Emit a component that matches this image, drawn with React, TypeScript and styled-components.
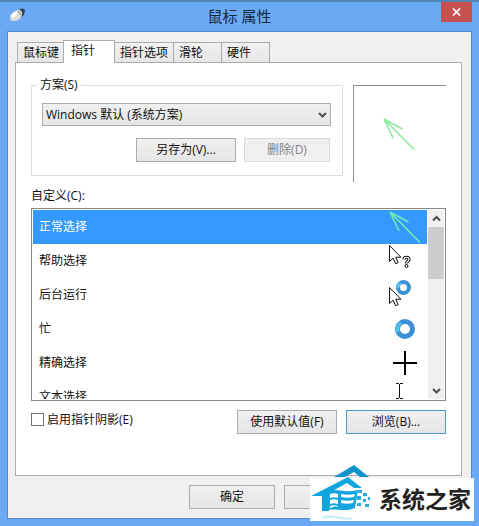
import React, { useState } from "react";
import styled, { createGlobalStyle, css } from "styled-components";

const GlobalStyle = createGlobalStyle`
  * { box-sizing: border-box; }
  body { margin: 0; background: #6aaaf5; }
  body, button, select, input {
    font-family: "Open Sans", "Noto Sans CJK SC", sans-serif;
    font-size: 12px;
    line-height: 16px;
    color: #111;
  }
`;

const Window = styled.div`
  position: relative;
  background: #6aaaf5;
  border-top: 2px solid #5384b3;
  padding: 0 7px 7px;
`;

const TitleBar = styled.header`
  display: grid;
  grid-template-columns: 32px 1fr 32px;
  align-items: start;
  height: 29px;
`;

const TitleIcon = styled.svg`
  margin: 5px 0 0 2px;
`;

const Title = styled.h1`
  margin: 4px 0 0;
  font-size: 15px;
  font-weight: 400;
  line-height: 20px;
  text-align: center;
  color: #16283c;
`;

const CloseButton = styled.button`
  display: flex;
  align-items: center;
  justify-content: center;
  justify-self: end;
  width: 31px;
  height: 20px;
  padding: 0;
  border: 0;
  background: #c75050;
`;

const Client = styled.main`
  padding: 8px 9px 9px 7px;
  border: 1px solid #5088cc;
  background: #f0f0f0;
`;

const TabStrip = styled.div`
  display: flex;
  align-items: flex-end;
  height: 23px;
  padding-left: 2px;
`;

const Tab = styled.button<{ $active: boolean }>`
  position: relative;
  height: 21px;
  margin-right: -1px;
  padding: 0 5px;
  border: 1px solid #acacac;
  background: linear-gradient(#f1f1f1, #e6e6e6);
  white-space: nowrap;
  ${(p) =>
    p.$active &&
    css`
      z-index: 1;
      height: 23px;
      margin-left: -1px;
      padding-bottom: 3px;
      border-bottom: 0;
      background: #fff;
    `}
`;

const RoomyTab = styled(Tab)`
  padding: 0 18px 0 5px;
  ${(p) => p.$active && css`padding: 0 19px 3px 7px;`}
`;

const Panel = styled.section`
  margin-top: -1px;
  padding: 14px 15px 41px;
  border: 1px solid #acacac;
  background: #fff;
`;

const SchemeRow = styled.div`
  display: grid;
  grid-template-columns: 312fr 93fr;
  gap: 10px;
  align-items: start;
`;

const SchemeGroup = styled.fieldset`
  min-width: 0;
  margin: 0;
  padding: 10px 11px 13px 10px;
  border: 1px solid #dcdcdc;
`;

const Legend = styled.legend`
  margin-left: -5px;
  padding: 0 3px;
`;

const SelectWrap = styled.div`
  display: grid;
  align-items: center;
  & > * { grid-area: 1 / 1; }
  & > svg { justify-self: end; margin-right: 4px; pointer-events: none; }
`;

const Select = styled.select`
  appearance: none;
  width: 100%;
  height: 23px;
  padding: 0 20px 0 3px;
  border: 1px solid #acacac;
  border-radius: 0;
  background: linear-gradient(#f0f0f0, #e5e5e5);
`;

const ButtonRow = styled.div`
  display: flex;
  justify-content: flex-end;
  gap: 8px;
  margin-top: 12px;
  padding-right: 1px;
`;

const PushButton = styled.button<{ $wide?: boolean; $primary?: boolean }>`
  width: ${(p) => (p.$wide ? 100 : 86)}px;
  height: 24px;
  padding: 0;
  border: 1px solid ${(p) => (p.$primary ? "#4a9bc9" : "#acacac")};
  background: linear-gradient(#f0f0f0, #e5e5e5);
  white-space: nowrap;
  &:disabled {
    border-color: #d9d9d9;
    background: #efefef;
    color: #838383;
  }
`;

const Preview = styled.div`
  height: 97px;
  margin-top: 8px;
  padding: 32px 0 0 29px;
  border-top: 1px solid #8c8c8c;
  border-left: 1px solid #8c8c8c;
`;

const ListLabel = styled.div`
  margin: 6px 0 4px;
`;

const ListFrame = styled.div`
  display: grid;
  grid-template-columns: 1fr 16px;
  column-gap: 1px;
  height: 193px;
  padding: 1px;
  border: 1px solid #828790;
`;

const CursorList = styled.ul`
  margin: 0;
  padding: 0;
  overflow: hidden;
  list-style: none;
`;

const CursorRow = styled.li<{ $selected: boolean }>`
  display: flex;
  align-items: center;
  justify-content: space-between;
  height: 34px;
  padding: 0 6px;
  background: ${(p) => (p.$selected ? "#3399ff" : "#fff")};
  color: ${(p) => (p.$selected ? "#fff" : "#111")};
`;

const ScrollBar = styled.div`
  display: flex;
  flex-direction: column;
  height: 189px;
  background: #f0f0f0;
`;

const ScrollButton = styled.button`
  display: flex;
  align-items: center;
  justify-content: center;
  height: 17px;
  padding: 0;
  border: 0;
  background: #f0f0f0;
`;

const ScrollTrack = styled.div`
  flex: 1;
`;

const ScrollThumb = styled.div`
  height: 52px;
  background: #cdcdcd;
`;

const OptionsRow = styled.div`
  display: flex;
  gap: 9px;
  margin-top: 9px;
`;

const CheckLabel = styled.label`
  display: flex;
  gap: 3px;
  margin-right: auto;
  padding-top: 2px;
`;

const CheckBox = styled.input`
  appearance: none;
  width: 13px;
  height: 13px;
  margin: 1px 0 0;
  border: 1px solid #707070;
  background: #fff;
  &:checked { background: #3399ff; }
`;

const Footer = styled.footer`
  display: flex;
  justify-content: flex-end;
  gap: 9px;
  margin-top: 9px;
  padding-right: 92px;
`;

const SiteBadge = styled.aside`
  position: absolute;
  z-index: 2;
  right: 5px;
  bottom: 5px;
  display: flex;
  align-items: flex-end;
  width: 164px;
  height: 43px;
  background: #fff;
`;

const BadgeLogo = styled.svg`
  flex: none;
`;

const BadgeName = styled.strong`
  margin: 0 0 8px 7px;
  font-family: "Noto Sans CJK SC", sans-serif;
  font-size: 23px;
  font-weight: 700;
  line-height: 30px;
  white-space: nowrap;
  color: #222;
`;

const Chevron = ({ up = false }: { up?: boolean }) => (
  <svg width="9" height="8" viewBox="0 0 9 8" aria-hidden="true">
    <path d={up ? "M1 5.5 4.5 2 8 5.5" : "M1 2 4.5 5.5 8 2"} fill="none" stroke="#505050" strokeWidth="2" />
  </svg>
);

const ArrowLines = ({ color }: { color: string }) => (
  <path d="M1 1 31 31.5M1 1 19.5 11M1 1 10 20" fill="none" stroke={color} strokeWidth="1.6" />
);

const PointerShape = ({ y = 0 }: { y?: number }) => (
  <path
    transform={`translate(0 ${y})`}
    d="M.5.5v16l3.6-3.4 2.5 5.6 2.6-1.1-2.4-5.4h5.1z"
    fill="#fff"
    stroke="#111"
  />
);

const cursors: { name: string; art: React.ReactNode }[] = [
  { name: "正常选择", art: <ArrowLines color="#6fe8b8" /> },
  {
    name: "帮助选择",
    art: (
      <>
        <PointerShape />
        <path d="M15 14.5c0-3 5-3 5 0 0 2-2.5 1.5-2.5 4" fill="none" stroke="#111" strokeWidth="3.2" />
        <path d="M15 14.5c0-3 5-3 5 0 0 2-2.5 1.5-2.5 4" fill="none" stroke="#fff" strokeWidth="1.2" />
        <circle cx="17.5" cy="21" r="1.5" fill="#fff" stroke="#111" />
      </>
    ),
  },
  {
    name: "后台运行",
    art: (
      <>
        <circle cx="14.5" cy="8.5" r="5.5" fill="#fff" stroke="#3a92d6" strokeWidth="4" />
        <path d="M9 9a5.5 5.5 0 0 1 3-5" fill="none" stroke="#56c0ec" strokeWidth="3" />
        <PointerShape y={8} />
      </>
    ),
  },
  {
    name: "忙",
    art: (
      <>
        <circle cx="16" cy="16" r="7.5" fill="#fff" stroke="#3a8fd6" strokeWidth="5" />
        <path d="M9 19a7.5 7.5 0 0 1 3-9" fill="none" stroke="#4fc0ee" strokeWidth="4" />
      </>
    ),
  },
  { name: "精确选择", art: <path d="M16 4v24M4 16h24" stroke="#000" strokeWidth="2" /> },
  { name: "文本选择", art: <path d="M7 2.5h3M11 2.5h3M10.5 3v14M7 17.5h3M11 17.5h3" stroke="#111" fill="none" /> },
];

const tabs = [
  { name: "鼠标键", roomy: false },
  { name: "指针", roomy: true },
  { name: "指针选项", roomy: false },
  { name: "滑轮", roomy: true },
  { name: "硬件", roomy: true },
];

export default function App() {
  const [tab, setTab] = useState("指针");
  const [selected, setSelected] = useState(0);

  return (
    <>
      <GlobalStyle />
      <Window>
        <TitleBar>
          <TitleIcon width="18" height="16" viewBox="0 0 18 16" aria-hidden="true">
            <path d="M10 4c1-3 4-3 6-1l-1 5-3 2z" fill="#36454f" />
            <path d="M1 10c0-3 5-7 9-7 3 0 4 4 2 7s-4 4-7 4-4-1-4-4z" fill="#dcdcd8" />
            <path d="M2 9c1-2 4-5 7-5l-2 5-3 2z" fill="#fff" />
            <path d="M9 4l3 4" stroke="#767d80" />
          </TitleIcon>
          <Title>鼠标 属性</Title>
          <CloseButton aria-label="关闭">
            <svg width="9" height="8" viewBox="0 0 9 8" aria-hidden="true">
              <path d="M1 .5 8 7.5M8 .5 1 7.5" stroke="#fff" strokeWidth="1.7" />
            </svg>
          </CloseButton>
        </TitleBar>
        <Client>
          <TabStrip role="tablist">
            {tabs.map(({ name, roomy }) => {
              const Part = roomy ? RoomyTab : Tab;
              return (
                <Part key={name} role="tab" aria-selected={tab === name} $active={tab === name} onClick={() => setTab(name)}>
                  {name}
                </Part>
              );
            })}
          </TabStrip>
          <Panel role="tabpanel">
            <SchemeRow>
              <SchemeGroup>
                <Legend>方案(S)</Legend>
                <SelectWrap>
                  <Select aria-label="方案">
                    <option>Windows 默认 (系统方案)</option>
                  </Select>
                  <Chevron />
                </SelectWrap>
                <ButtonRow>
                  <PushButton $wide>另存为(V)...</PushButton>
                  <PushButton disabled>删除(D)</PushButton>
                </ButtonRow>
              </SchemeGroup>
              <Preview>
                <svg width="33" height="33" viewBox="0 0 33 33" aria-hidden="true">
                  <ArrowLines color="#8de99a" />
                </svg>
              </Preview>
            </SchemeRow>
            <ListLabel id="cursor-list-label">自定义(C):</ListLabel>
            <ListFrame>
              <CursorList role="listbox" aria-labelledby="cursor-list-label">
                {cursors.map(({ name, art }, i) => (
                  <CursorRow key={name} role="option" aria-selected={i === selected} $selected={i === selected} onClick={() => setSelected(i)}>
                    {name}
                    <svg width="32" height="32" viewBox="0 0 32 32" aria-hidden="true">
                      {art}
                    </svg>
                  </CursorRow>
                ))}
              </CursorList>
              <ScrollBar>
                <ScrollButton aria-label="向上滚动">
                  <Chevron up />
                </ScrollButton>
                <ScrollTrack>
                  <ScrollThumb />
                </ScrollTrack>
                <ScrollButton aria-label="向下滚动">
                  <Chevron />
                </ScrollButton>
              </ScrollBar>
            </ListFrame>
            <OptionsRow>
              <CheckLabel>
                <CheckBox type="checkbox" />
                启用指针阴影(E)
              </CheckLabel>
              <PushButton $wide>使用默认值(F)</PushButton>
              <PushButton $wide $primary>浏览(B)...</PushButton>
            </OptionsRow>
          </Panel>
          <Footer>
            <PushButton>确定</PushButton>
            <PushButton aria-label="取消" />
          </Footer>
        </Client>
        <SiteBadge>
          <BadgeLogo width="62" height="56" viewBox="0 0 62 56" aria-hidden="true">
            <path d="M24 12 44 0 59 12H50L44 7 35 12z" fill="#0e93cb" />
            <path d="M1 31 38 12 52 23H44L37 18 19 28V31z" fill="#12a5de" />
            <path d="M12 30h7v16h-7z" fill="#12a5de" />
            <path d="M18 27c8-5 14 2 30-2l-3 18c-12 5-20-1-33 3l3-4z" fill="#12a5de" />
            <path
              d="M20 29c3-1 5-1 8 0v4c-3-1-5-1-8 0zM31 29c5 1 9 1 14 0l-1 3c-5 1-9 1-13 0zM20 35c3-1 5-1 8 0v4c-3-1-5-1-8 0zM31 35c4 1 8 1 13 0l-1 3c-4 1-8 1-12 0zM20 41c3-1 5-1 8 0v1c-3-1-5 0-8 1z"
              fill="#fff"
            />
            <path d="M48 25h4v3h-4zM53 28h4v3h-4zM47 31h4v4h-4zM53 34h3v3h-3zM58 32h2v3h-2zM47 38h4v3h-4zM55 39h4v3h-4z" fill="#2aaadf" />
            <path d="M12 52c9-4 19 1 31 1l-2 2c-10 0-18-4-29-1z" fill="#c9edf7" />
          </BadgeLogo>
          <BadgeName>系统之家</BadgeName>
        </SiteBadge>
      </Window>
    </>
  );
}
